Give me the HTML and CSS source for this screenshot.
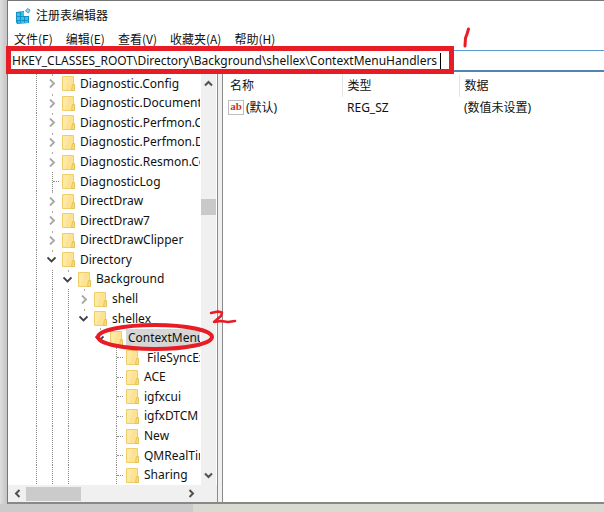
FILE: index.html
```html
<!DOCTYPE html>
<html lang="zh-CN">
<head>
<meta charset="utf-8">
<title>注册表编辑器</title>
<link rel="stylesheet" href="styles.css">
</head>
<body>
<svg class="defs" aria-hidden="true">
  <symbol id="folder" viewBox="0 0 13 17">
    <path d="M0.500 1.500H11.500V15.500H0.500Z" fill="#fde391" stroke="#f0cd68"/>
    <path d="M1 2H7L3 15H1Z" fill="#fde9a6"/>
    <path d="M10.500 9.500H12.500V15.500H9.500Z" fill="#f9dc7c" stroke="#e6c25a"/>
  </symbol>
  <symbol id="closed" viewBox="0 0 9 9"><path d="M3 0.500L7 4.500L3 8.500" fill="none" stroke="#a6a6a6" stroke-width="1.800"/></symbol>
  <symbol id="open" viewBox="0 0 9 9"><path d="M0.500 2.500L4.500 6.500L8.500 2.500" fill="none" stroke="#404040" stroke-width="1.800"/></symbol>
</svg>
<div class="window">
  <header class="title">
    <svg class="app-icon" viewBox="0 0 16 16" aria-hidden="true">
      <path d="M1 4L9 3V8H14V15L2 16L1 14Z" fill="#1590c6"/>
      <path d="M2 5H5V8H2ZM6 4H9V8H6ZM2 9H5V12H2ZM6 9H9V12H6ZM10 9H13V12H10ZM3 13H5V15H3ZM6 13H9V15H6ZM10 13H13V15H10Z" fill="#35c3ed"/>
      <path d="M12.500 0.500L15 2L13.500 5L10.500 3Z" fill="#8bdcf3" stroke="#2b8fb8" stroke-width=".8"/>
    </svg>
    <h1>注册表编辑器</h1>
  </header>
  <nav class="menu">
    <button>文件(F)</button><button>编辑(E)</button><button>查看(V)</button><button>收藏夹(A)</button><button>帮助(H)</button>
  </nav>
  <input class="address" type="text" aria-label="地址" spellcheck="false" value="HKEY_CLASSES_ROOT\Directory\Background\shellex\ContextMenuHandlers">
  <main class="panes">
    <section class="tree-pane">
      <div class="tree-body">
        <ul class="tree">
          <li><i class="line"></i><button class="twist" aria-label="展开"><svg><use href="#closed"/></svg></button><svg class="folder"><use href="#folder"/></svg><span>Diagnostic.Config</span></li>
          <li><i class="line"></i><button class="twist" aria-label="展开"><svg><use href="#closed"/></svg></button><svg class="folder"><use href="#folder"/></svg><span>Diagnostic.Document</span></li>
          <li><i class="line"></i><button class="twist" aria-label="展开"><svg><use href="#closed"/></svg></button><svg class="folder"><use href="#folder"/></svg><span>Diagnostic.Perfmon.C</span></li>
          <li><i class="line"></i><button class="twist" aria-label="展开"><svg><use href="#closed"/></svg></button><svg class="folder"><use href="#folder"/></svg><span>Diagnostic.Perfmon.D</span></li>
          <li><i class="line"></i><button class="twist" aria-label="展开"><svg><use href="#closed"/></svg></button><svg class="folder"><use href="#folder"/></svg><span>Diagnostic.Resmon.Co</span></li>
          <li><i class="line"></i><i class="line leaf"></i><svg class="folder"><use href="#folder"/></svg><span>DiagnosticLog</span></li>
          <li><i class="line"></i><button class="twist" aria-label="展开"><svg><use href="#closed"/></svg></button><svg class="folder"><use href="#folder"/></svg><span>DirectDraw</span></li>
          <li><i class="line"></i><button class="twist" aria-label="展开"><svg><use href="#closed"/></svg></button><svg class="folder"><use href="#folder"/></svg><span>DirectDraw7</span></li>
          <li><i class="line"></i><button class="twist" aria-label="展开"><svg><use href="#closed"/></svg></button><svg class="folder"><use href="#folder"/></svg><span>DirectDrawClipper</span></li>
          <li><i class="line"></i><button class="twist" aria-label="折叠"><svg><use href="#open"/></svg></button><svg class="folder"><use href="#folder"/></svg><span>Directory</span></li>
          <li><i class="line"></i><i class="line"></i><button class="twist" aria-label="折叠"><svg><use href="#open"/></svg></button><svg class="folder"><use href="#folder"/></svg><span>Background</span></li>
          <li><i class="line"></i><i class="line"></i><i class="line"></i><button class="twist" aria-label="展开"><svg><use href="#closed"/></svg></button><svg class="folder"><use href="#folder"/></svg><span>shell</span></li>
          <li><i class="line"></i><i class="line"></i><i class="line"></i><button class="twist" aria-label="折叠"><svg><use href="#open"/></svg></button><svg class="folder"><use href="#folder"/></svg><span>shellex</span></li>
          <li><i class="line"></i><i class="line"></i><i class="line"></i><i></i><button class="twist" aria-label="折叠"><svg><use href="#open"/></svg></button><svg class="folder"><use href="#folder"/></svg><span class="selected">ContextMenu</span></li>
          <li><i class="line"></i><i class="line"></i><i class="line"></i><i></i><i></i><i class="line leaf"></i><svg class="folder"><use href="#folder"/></svg><span>&nbsp;FileSyncEx</span></li>
          <li><i class="line"></i><i class="line"></i><i class="line"></i><i></i><i></i><i class="line leaf"></i><svg class="folder"><use href="#folder"/></svg><span>ACE</span></li>
          <li><i class="line"></i><i class="line"></i><i class="line"></i><i></i><i></i><i class="line leaf"></i><svg class="folder"><use href="#folder"/></svg><span>igfxcui</span></li>
          <li><i class="line"></i><i class="line"></i><i class="line"></i><i></i><i></i><i class="line leaf"></i><svg class="folder"><use href="#folder"/></svg><span>igfxDTCM</span></li>
          <li><i class="line"></i><i class="line"></i><i class="line"></i><i></i><i></i><i class="line leaf"></i><svg class="folder"><use href="#folder"/></svg><span>New</span></li>
          <li><i class="line"></i><i class="line"></i><i class="line"></i><i></i><i></i><i class="line leaf"></i><svg class="folder"><use href="#folder"/></svg><span>QMRealTin</span></li>
          <li><i class="line"></i><i class="line"></i><i class="line"></i><i></i><i></i><i class="line leaf"></i><svg class="folder"><use href="#folder"/></svg><span>Sharing</span></li>
        </ul>
        <div class="vbar">
          <svg viewBox="0 0 9 9"><path d="M1 6.500L4.500 3L8 6.500"/></svg>
          <div class="vtrack"><div class="vthumb"></div></div>
          <svg viewBox="0 0 9 9"><path d="M1 2.500L4.500 6L8 2.500"/></svg>
        </div>
      </div>
      <div class="hbar">
        <svg viewBox="0 0 9 9"><path d="M6.500 1L3 4.500L6.500 8"/></svg>
        <div class="htrack"><div class="hthumb"></div></div>
        <svg viewBox="0 0 9 9"><path d="M2.500 1L6 4.500L2.500 8"/></svg>
      </div>
    </section>
    <section class="values">
      <table>
        <thead><tr><th class="name">名称</th><th class="type">类型</th><th>数据</th></tr></thead>
        <tbody><tr>
          <td><div class="value-name"><span class="ab" aria-hidden="true">ab</span>(默认)</div></td>
          <td>REG_SZ</td><td>(数值未设置)</td>
        </tr></tbody>
      </table>
    </section>
  </main>
</div>
<svg class="marks" width="604" height="512" viewBox="0 0 604 512" fill="none" stroke="#e81c24" aria-hidden="true">
  <path d="M440.500 53V69" stroke="#000"/>
  <rect x="8.500" y="48.500" width="443" height="23" stroke-width="5"/>
  <ellipse cx="155" cy="337" rx="57" ry="12" stroke-width="4"/>
  <path d="M468.500 29L467 34L465.500 38L465 46" stroke-width="3" stroke-linecap="round"/>
  <path d="M211 313L218 311.500L222 312.500L221 316L214 322L221 321L228 322L235 321" stroke-width="2.500" stroke-linecap="round" stroke-linejoin="round"/>
</svg>
</body>
</html>
```
FILE: styles.css
```css
* { box-sizing: border-box; }

body {
  margin: 0;
  min-height: 100vh;
  padding: 0 0 8px 7px;
  display: flex;
  flex-direction: column;
  overflow: hidden;
  font: 12px/18px "Noto Sans", "Noto Sans CJK SC", sans-serif;
  color: #111;
  background:
    linear-gradient(90deg, #cbcbcb 193px, #d9dbd3 193px) bottom / 100% 8px no-repeat,
    linear-gradient(90deg, #dedede, #c4c4c4 7px);
}

button, input { font: inherit; color: inherit; }
button { border: 0; padding: 0; background: none; }
.defs { position: absolute; width: 0; height: 0; }

.window {
  flex: 1;
  display: flex;
  flex-direction: column;
  min-width: 0;
  background: #fff;
  border: 1px solid #777;
  border-right: 0;
  border-bottom: 2px solid #878984;
}

.title {
  display: flex;
  align-items: center;
  gap: 5px;
  height: 29px;
  padding-left: 7px;
}
.app-icon { width: 16px; height: 16px; }
.title h1 { margin: 0; font-size: 12px; font-weight: 400; }

.menu {
  display: flex;
  align-items: flex-start;
  gap: 13px;
  height: 20px;
  padding-left: 6px;
  font-family: "Noto Sans CJK SC", sans-serif;
}

.address {
  width: 100%;
  height: 22px;
  padding: 0 4px;
  border: solid #5d9bce;
  border-width: 1px 0 2px;
  border-bottom-color: #4f86b4;
  outline: 0;
  background: #fff;
}

.panes {
  flex: 1;
  display: flex;
  gap: 4px;
  background: #f0f0f0;
}
.tree-pane {
  width: 210px;
  display: flex;
  flex-direction: column;
  background: #fff;
  border-right: 1px solid #8a8a8a;
}
.tree-body { flex: 1; display: flex; padding-top: 2px; }

.tree {
  flex: 1;
  min-width: 0;
  margin: 0 1px 0 0;
  padding: 0 0 0 19px;
  list-style: none;
  display: grid;
  grid-auto-rows: minmax(19px, 1fr);
  overflow: hidden;
}
.tree li { display: flex; align-items: center; white-space: nowrap; overflow: hidden; }
.tree i, .twist { flex: none; width: 16px; align-self: stretch; }
.line { background: repeating-linear-gradient(#8c8c8c 0 1px, #fff 1px 2px) 9px 0 / 1px 100% no-repeat; }
.leaf { display: flex; align-items: center; justify-content: flex-end; }
.leaf::after { content: ""; width: 6px; border-top: 1px dotted #8c8c8c; }
.twist {
  display: flex;
  align-items: center;
  justify-content: center;
  background: linear-gradient(#aaa 0 2px, #fff 2px) 9px 0 / 1px 100% no-repeat;
}
.twist svg { width: 9px; height: 9px; }
.folder { flex: none; width: 13px; height: 17px; margin: 0 3px 0 3px; }
.tree span { padding: 0 2px; }
.tree .selected { flex: 1; background: #d6d6d6; }

.vbar {
  width: 15px;
  margin-right: 1px;
  display: flex;
  flex-direction: column;
  align-items: center;
  padding: 5px 0;
  background: #f0f0f0;
}
.vbar svg, .hbar svg { flex: none; width: 9px; height: 9px; fill: none; stroke: #505050; stroke-width: 2; }
.vtrack { flex: 1; align-self: stretch; }
.vtrack::before { content: ""; display: block; height: 29%; }
.vthumb { height: 16px; background: #c9c9c9; }

.hbar {
  display: flex;
  align-items: center;
  height: 17px;
  padding: 0 21px 0 5px;
  background: #f0f0f0;
}
.htrack { flex: 1; padding-left: 4px; }
.hthumb { width: 34%; height: 14px; background: #cbcbcb; }

.values { flex: 1; min-width: 0; padding-top: 2px; background: #fff; border-left: 1px solid #8a8a8a; }
.values table { width: 100%; border-collapse: collapse; table-layout: fixed; }
.values th, .values td { padding: 0 0 0 5px; text-align: left; font-weight: 400; white-space: nowrap; }
.values th { height: 23px; border-left: 1px solid #e5e5e5; }
.values th:first-child { border-left: 0; padding-left: 7px; }
.values td { height: 21px; }
.name { width: 119px; }
.type { width: 117px; }
.value-name { display: flex; align-items: center; gap: 2px; }
.ab {
  width: 16px;
  height: 15px;
  border: 1px solid #bdbdbd;
  font: bold 11px/11px "Liberation Serif", serif;
  text-align: center;
  color: #c8391f;
}

.marks { position: absolute; left: 0; top: 0; pointer-events: none; }
```
